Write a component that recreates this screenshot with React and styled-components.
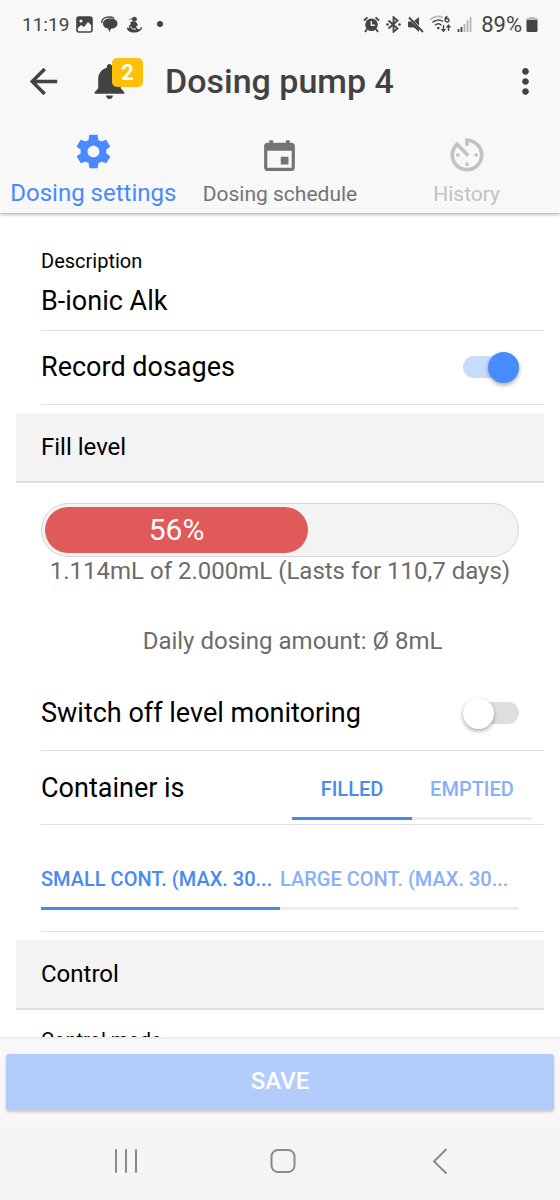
import React, { useState } from 'react';
import styled, { createGlobalStyle } from 'styled-components';
import {
  IoMdArrowBack,
  IoMdCalendar,
  IoMdMore,
  IoMdNotifications,
  IoMdSettings,
} from 'react-icons/io';
import { MdAvTimer } from 'react-icons/md';

const App = () => {
  const [description, setDescription] = useState('B-ionic Alk');
  const [record, setRecord] = useState(true);
  const [monitoringOff, setMonitoringOff] = useState(false);
  const [container, setContainer] = useState('FILLED');
  const [size, setSize] = useState('SMALL CONT. (MAX. 30...');

  return (
    <Screen>
      <GlobalStyle />
      <Header>
        <StatusBar />
        <Toolbar>
          <IconButton aria-label="Back">
            <IoMdArrowBack size={41} />
          </IconButton>
          <BellButton aria-label="Notifications">
            <IoMdNotifications size={43} />
            <Badge>2</Badge>
          </BellButton>
          <Title>Dosing pump 4</Title>
          <IconButton aria-label="More">
            <IoMdMore size={43} />
          </IconButton>
        </Toolbar>
        <Tabs>
          <Tab $active>
            <IoMdSettings size={41} />
            Dosing settings
          </Tab>
          <Tab>
            <IoMdCalendar size={41} />
            Dosing schedule
          </Tab>
          <Tab disabled>
            <MdAvTimer size={44} />
            History
          </Tab>
        </Tabs>
      </Header>

      <Content>
        <StackedItem>
          <SmallLabel htmlFor="description">Description</SmallLabel>
          <TextInput
            id="description"
            value={description}
            onChange={e => setDescription(e.target.value)}
          />
        </StackedItem>
        <Item>
          <Label htmlFor="record">Record dosages</Label>
          <Toggle
            id="record"
            type="checkbox"
            role="switch"
            checked={record}
            onChange={e => setRecord(e.target.checked)}
          />
        </Item>

        <Divider>Fill level</Divider>
        <FillLevel>
          <Bar>
            <BarFill style={{ width: '56%' }}>56%</BarFill>
          </Bar>
          <Info>1.114mL of 2.000mL (Lasts for 110,7 days)</Info>
        </FillLevel>
        <DailyAmount>Daily dosing amount: Ø 8mL</DailyAmount>
        <Item>
          <Label htmlFor="monitoring">Switch off level monitoring</Label>
          <Toggle
            id="monitoring"
            type="checkbox"
            role="switch"
            checked={monitoringOff}
            onChange={e => setMonitoringOff(e.target.checked)}
          />
        </Item>
        <SegmentItem>
          <Label as="span">Container is</Label>
          <Segment $width="240px">
            {['FILLED', 'EMPTIED'].map(name => (
              <SegmentButton
                key={name}
                $active={container === name}
                onClick={() => setContainer(name)}
              >
                {name}
              </SegmentButton>
            ))}
          </Segment>
        </SegmentItem>
        <SizeItem>
          <Segment $width="100%">
            {['SMALL CONT. (MAX. 30...', 'LARGE CONT. (MAX. 30...'].map(name => (
              <SegmentButton
                key={name}
                $left
                $active={size === name}
                onClick={() => setSize(name)}
              >
                {name}
              </SegmentButton>
            ))}
          </Segment>
        </SizeItem>

        <Divider>Control</Divider>
        <ControlItem>
          <SmallLabel as="span">Control mode</SmallLabel>
        </ControlItem>
      </Content>

      <Footer>
        <SaveButton disabled>SAVE</SaveButton>
      </Footer>
      <SystemNav />
    </Screen>
  );
};

const StatusBar = () => (
  <StatusRow>
    <Clock>11:19</Clock>
    <StatusIcons>
      {/* picture */}
      <svg width="17" height="17" viewBox="0 0 17 17">
        <rect x="1" y="1" width="15" height="15" rx="2" fill="none" stroke="#444" strokeWidth="1.6" />
        <path fill="#444" d="M1 1h15v9l-4-4-4 5-3-2-4 4z" />
        <circle cx="5" cy="5" r="1.6" fill="#f8f8f8" />
      </svg>
      {/* chat */}
      <svg width="17" height="17" viewBox="0 0 17 17">
        <path fill="none" stroke="#444" strokeWidth="1.4" d="M1 7C0 3 4 1 8 1c3 0 4 .5 5 1.200" />
        <path fill="#444" d="M9 2.500c5 0 7.500 2 7.500 5.200 0 3-2.500 4.800-6.500 5L8.500 16 7 12.500C3.500 12 2 10 2 7.700 2 4.500 4.500 2.500 9 2.500z" />
      </svg>
      {/* diver */}
      <svg width="17" height="17" viewBox="0 0 17 17">
        <circle cx="8.500" cy="3.200" r="2.400" fill="#444" />
        <path fill="#444" d="M2 3.500 7 2v1.500zM7 5l3 1 2 3-2 1.500 1 2 2.500 1 1.500-2.500 1 .5C15.500 15 12 16.500 8 16.500S1 15 .8 11.500l2.500.5-.5-2L5 8l-1-1.500z" />
        <path fill="none" stroke="#f8f8f8" d="M4.500 10.500c1 2.500 3 3 5.500 2.500" />
      </svg>
      <Dot />
    </StatusIcons>
    <StatusRight>
      {/* alarm */}
      <svg width="17" height="17" viewBox="0 0 17 17">
        <circle cx="8.500" cy="8.800" r="6.300" fill="#444" />
        <path fill="none" stroke="#444" strokeWidth="1.800" d="M1 4.500 4.500 1.300M12.500 1.300 16 4.500M4 13l-2 3M13 13l2 3" />
        <path fill="none" stroke="#f8f8f8" strokeWidth="1.400" d="M8.300 5v4.200h3.500" />
      </svg>
      {/* bluetooth */}
      <svg width="17" height="17" viewBox="0 0 17 17">
        <path fill="none" stroke="#444" strokeWidth="1.800" d="m3.500 4.500 9 8-4 3.300V1.200l4 3.300-9 8" />
        <circle cx="2.500" cy="8.500" r="1.300" fill="#444" />
        <circle cx="14.500" cy="8.500" r="1.300" fill="#444" />
      </svg>
      {/* sound off */}
      <svg width="17" height="17" viewBox="0 0 17 17">
        <path fill="#444" d="M1 5.500h3l8 7.500v3l-5-4.500H3L1 11zM7 5l5-4v8.500z" />
        <path stroke="#444" strokeWidth="1.800" d="m2 1.500 14 14.500" />
      </svg>
      {/* wifi 6 */}
      <svg width="23" height="18" viewBox="0 0 23 18">
        <path fill="none" stroke="#bbb" strokeWidth="1.700" d="M1 5c3-3.700 9-4.500 13-2.500" />
        <path fill="none" stroke="#444" strokeWidth="1.500" d="M3.500 7.500c3-3 7.500-3 10.500-1M6 10.300c2-1.800 4.500-1.800 6.500 0" />
        <circle cx="9.300" cy="13" r="1.300" fill="#444" />
        <path fill="none" stroke="#444" strokeWidth="1.300" d="M18.500 1.500c-3 .5-3.500 5.500-.5 5.500s2.500-3.500 0-3.500c-1 0-2 .7-2 1.800M14.500 10v6M12.500 14l2 2.300 2-2.300M19.500 16v-5.500M17.500 12.500l2-2.300 2 2.300" />
      </svg>
      {/* signal */}
      <svg width="15" height="17" viewBox="0 0 15 17">
        <path stroke="#444" strokeWidth="1.800" d="M1.500 16v-3M4.500 16v-5" />
        <path stroke="#b5b5b5" strokeWidth="1.800" d="M7.500 16V8M10.500 16V4.500M13.500 16V1" />
      </svg>
      <Percent>89%</Percent>
      {/* battery */}
      <svg width="12" height="16" viewBox="0 0 12 16">
        <path fill="#bbb" d="M3 1h6v1h2q1 0 1 2H0q0-2 1-2h2z" />
        <path fill="#444" d="M.5 4h11v10.500q0 1.500-1.500 1.500H2Q.5 16 .5 14.500z" />
      </svg>
    </StatusRight>
  </StatusRow>
);

const SystemNav = () => (
  <NavRow>
    <NavButton aria-label="Recent apps">
      <svg width="26" height="26" viewBox="0 0 26 26">
        <path d="M3 2v22M13 2v22M23 2v22" />
      </svg>
    </NavButton>
    <NavButton aria-label="Home">
      <svg width="26" height="26" viewBox="0 0 26 26">
        <rect x="1.500" y="2" width="23" height="22" rx="6.500" />
      </svg>
    </NavButton>
    <NavButton aria-label="System back">
      <svg width="26" height="26" viewBox="0 0 26 26">
        <path d="M19 1.500 7 13.500 19 25" />
      </svg>
    </NavButton>
  </NavRow>
);

const GlobalStyle = createGlobalStyle`
  * {
    box-sizing: border-box;
  }
  body {
    margin: 0;
    background-color: #fff;
    font-family: Roboto, 'Liberation Sans', sans-serif;
    color: #000;
  }
  button, input {
    font-family: inherit;
    margin: 0;
    padding: 0;
    border: none;
    background: none;
  }
  svg {
    display: block;
    flex-shrink: 0;
  }
`;

const Screen = styled.div`
  display: flex;
  flex-direction: column;
  height: 100vh;
`;

const Header = styled.header`
  background-color: #f8f8f8;
  box-shadow: 0 1px 4px rgba(0, 0, 0, 0.4);
  z-index: 1;
`;

const StatusRow = styled.div`
  display: flex;
  align-items: center;
  height: 48px;
  padding: 0 22px;
  color: #444;
`;

const Clock = styled.span`
  width: 54px;
  font-size: 19px;
`;

const StatusIcons = styled.div`
  display: flex;
  align-items: center;
  gap: 8px;
`;

const Dot = styled.span`
  width: 6px;
  height: 6px;
  margin-left: 6px;
  border-radius: 50%;
  background-color: #444;
`;

const StatusRight = styled.div`
  display: flex;
  align-items: center;
  gap: 5px;
  margin-left: auto;
`;

const Percent = styled.span`
  margin: 0 -1px 0 4px;
  font-size: 22px;
`;

const Toolbar = styled.div`
  display: flex;
  align-items: center;
  height: 66px;
  padding: 0 13px 0 23px;
  color: #424242;
`;

const IconButton = styled.button`
  display: flex;
  color: inherit;
`;

const BellButton = styled(IconButton)`
  position: relative;
  margin-left: 24px;
`;

const Badge = styled.span`
  position: absolute;
  top: -2px;
  left: 24px;
  width: 31px;
  height: 29px;
  border-radius: 5px;
  background-color: #ffc107;
  color: #fff;
  font-size: 22px;
  font-weight: 700;
  line-height: 29px;
`;

const Title = styled.h1`
  flex: 1;
  margin: 0 0 0 34px;
  font-size: 34px;
  font-weight: 500;
`;

const Tabs = styled.nav`
  display: grid;
  grid-template-columns: repeat(3, 1fr);
`;

const Tab = styled.button`
  display: flex;
  flex-direction: column;
  align-items: center;
  justify-content: flex-end;
  gap: ${props => (props.$active ? 7 : 4)}px;
  height: 99px;
  padding-bottom: ${props => (props.$active ? 6 : 5)}px;
  color: ${props => (props.$active ? '#488aff' : '#747474')};
  font-size: ${props => (props.$active ? 24 : 21)}px;
  line-height: 28px;
  white-space: nowrap;
  &:disabled {
    gap: 3px;
    color: #c2c2c2;
  }
`;

const Content = styled.main`
  flex: 1;
  min-height: 0;
  overflow: hidden;
  padding: 16px;
`;

const Item = styled.div`
  display: flex;
  align-items: center;
  justify-content: space-between;
  min-height: 74px;
  margin-left: 25px;
  padding-right: 25px;
  padding-bottom: 1px;
  border-bottom: 1px solid #dedede;
`;

const StackedItem = styled(Item)`
  flex-direction: column;
  align-items: stretch;
  gap: 12px;
  padding-top: 20px;
  padding-bottom: 13px;
`;

const ControlItem = styled(StackedItem)`
  justify-content: flex-start;
  padding-top: 18px;
  border: none;
`;

const SegmentItem = styled(Item)`
  padding-right: 12px;
  padding-bottom: 0;
`;

const SizeItem = styled(Item)`
  padding-top: 21px;
  padding-bottom: 21px;
`;

const Label = styled.label`
  font-size: 27px;
  line-height: 32px;
`;

const SmallLabel = styled.label`
  font-size: 20px;
  line-height: 24px;
`;

const TextInput = styled.input`
  width: 100%;
  height: 32px;
  font-size: 27px;
  outline: none;
`;

const Toggle = styled.input`
  appearance: none;
  display: flex;
  align-items: center;
  width: 56px;
  height: 22px;
  border-radius: 11px;
  background-color: ${props => (props.checked ? '#c8dcff' : '#dedede')};
  &::before {
    content: '';
    width: 31px;
    height: 31px;
    flex-shrink: 0;
    margin-left: ${props => (props.checked ? 25 : 0)}px;
    border-radius: 50%;
    background-color: ${props => (props.checked ? '#488aff' : '#fff')};
    box-shadow: 0 2px 4px rgba(0, 0, 0, 0.35);
  }
`;

const Divider = styled.h2`
  margin: 8px 0 0;
  padding: 18px 25px;
  border-bottom: 2px solid #dedede;
  background-color: #f3f3f3;
  font-size: 24px;
  font-weight: 400;
  line-height: 32px;
`;

const FillLevel = styled.div`
  padding: 20px 25px 0;
`;

const Bar = styled.div`
  height: 54px;
  padding: 3px;
  border: 1px solid #d6d6d6;
  border-radius: 27px;
  background-color: #f3f3f3;
`;

const BarFill = styled.div`
  height: 46px;
  border-radius: 23px;
  background-color: #e05a5a;
  color: #fff;
  font-size: 30px;
  line-height: 46px;
  text-align: center;
`;

const Info = styled.p`
  margin: 0;
  color: #6b6b6b;
  font-size: 24px;
  line-height: 28px;
  text-align: center;
  white-space: nowrap;
`;

const DailyAmount = styled(Info)`
  margin: 42px 0 22px 25px;
`;

const Segment = styled.div`
  display: grid;
  grid-template-columns: 1fr 1fr;
  width: ${props => props.$width};
`;

const SegmentButton = styled.button`
  height: 54px;
  margin-top: 10px;
  padding-bottom: 5px;
  border-bottom: 3px solid ${props => (props.$active ? '#4a8af0' : '#ededed')};
  color: ${props => (props.$active ? '#4a8af0' : '#88b0f8')};
  font-size: 20px;
  font-weight: 500;
  text-align: ${props => (props.$left ? 'left' : 'center')};
  white-space: nowrap;
`;

const Footer = styled.footer`
  padding: 15px 6px 17px;
  border-top: 2px solid #ececec;
  background-color: #f8f8f8;
`;

const SaveButton = styled.button`
  width: 100%;
  height: 56px;
  padding-bottom: 2px;
  border-radius: 3px;
  background-color: #b2ccfb;
  box-shadow: 0 2px 3px rgba(0, 0, 0, 0.2);
  color: #fff;
  font-size: 24px;
  font-weight: 500;
`;

const NavRow = styled.div`
  display: flex;
  justify-content: center;
  gap: 131px;
  padding: 21px 0 26px 5px;
  background-color: #f5f5f8;
`;

const NavButton = styled.button`
  svg {
    fill: none;
    stroke: #8a8a8a;
    stroke-width: 2;
    stroke-linecap: round;
  }
`;

export default App;
